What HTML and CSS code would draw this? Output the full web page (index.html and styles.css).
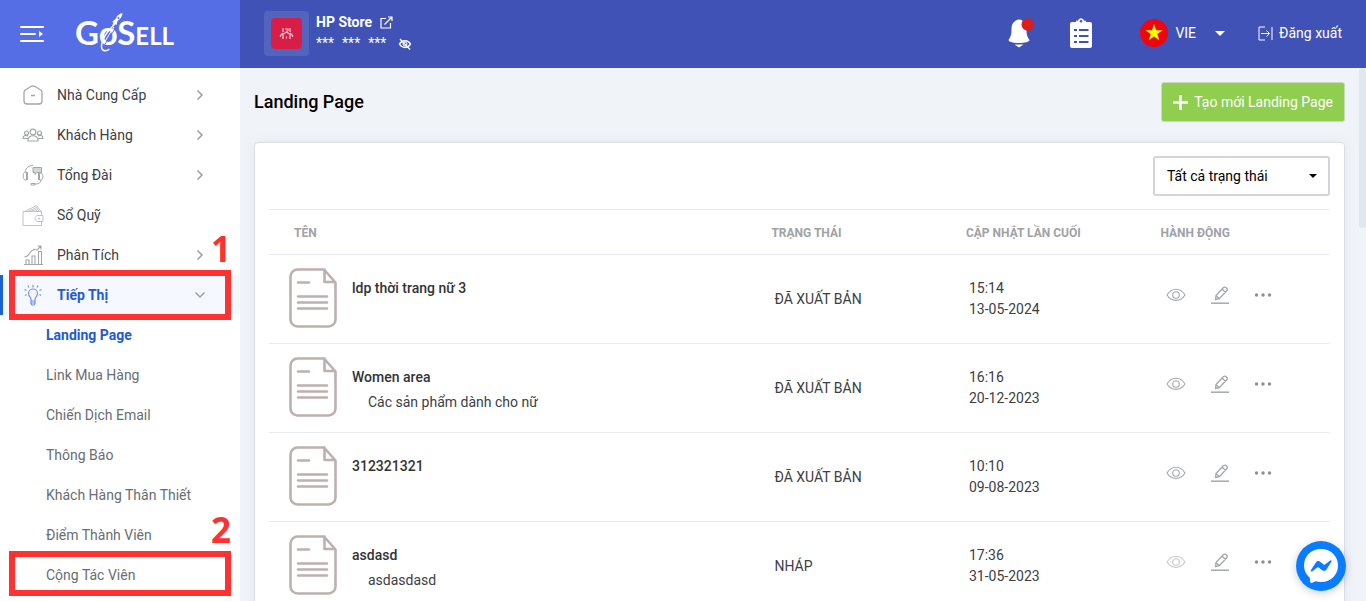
FILE: index.html
```html
<!DOCTYPE html>
<html lang="vi">
<head>
<meta charset="utf-8">
<meta name="viewport" content="width=device-width, initial-scale=1">
<title>Landing Page - GoSell</title>
<link rel="stylesheet" href="styles.css">
</head>
<body>
<svg class="sprite" aria-hidden="true">
  <symbol id="chevron" viewBox="0 0 12 12"><path d="M3.5 1.5 8 6l-4.500 4.500" fill="none" stroke="currentColor" stroke-width="1.500"/></symbol>
  <symbol id="doc" viewBox="0 0 48 62"><g fill="none" stroke="currentColor" stroke-width="2.600" stroke-linecap="round" stroke-linejoin="round"><path d="M35 1.500H8.500a7 7 0 0 0-7 7v43a7 7 0 0 0 7 7h31a7 7 0 0 0 7-7V14.500zM35.500 1.500V14h10.500"/><path d="M9 14.500h11M9 28.500h29M9 34.500h29M9 40.500h29"/></g></symbol>
  <symbol id="eye" viewBox="0 0 20 16"><g fill="none" stroke="currentColor" stroke-width="1.100"><path d="M1 8C5.500 0.300 14.500 0.300 19 8 14.500 15.200 5.500 15.200 1 8z"/><circle cx="10" cy="8" r="3.300"/></g></symbol>
  <symbol id="edit" viewBox="0 0 18 18"><g fill="none" stroke="currentColor" stroke-width="1.300" stroke-linejoin="round"><path d="M4.500 13.500 5 9.500 12.500 1.500Q14 .5 15.500 2T16 4.500L8.500 12.500zM11 3l3.500 3.500M5 9.700l3.400 2.800"/><path d="M0 17.200h18" stroke-width="1.500"/></g></symbol>
  <symbol id="dots" viewBox="0 0 18 4"><g fill="currentColor"><circle cx="2.500" cy="2" r="1.700"/><circle cx="9" cy="2" r="1.700"/><circle cx="15.500" cy="2" r="1.700"/></g></symbol>
</svg>

<header class="topbar">
  <div class="brand">
    <button class="menu-toggle" type="button" aria-label="Menu">
      <svg width="24" height="18" viewBox="0 0 24 18"><path d="M1 2h22M1 9h14M1 16h22" stroke="#fff" stroke-width="2" stroke-linecap="round"/><path d="M19 6v6l4-3z" fill="#fff"/></svg>
    </button>
    <a class="logo" href="#"><span class="logo-big">GoS</span><span class="logo-small">ELL</span>
      <svg class="rocket" width="24" height="40" viewBox="0 0 24 40"><path d="M22.500 0C19 .5 17 2.500 15.500 6L12 9l1.500.5L12 13l3-2 1.500 1 1-4C20.500 6 22.500 3 22.500 0z" fill="#fff"/><circle cx="18.500" cy="5" r="1" fill="#556ee6"/><path d="M15 11C8 17 1 27 1.500 34c.5 5 5 4.500 8 2" fill="none" stroke="#fff" stroke-width="1.500"/><path d="M16 14C12 21 6.500 28 3.500 34" fill="none" stroke="#556ee6" stroke-width="1"/><path d="M14 14C10 20 6 26 4 31" fill="none" stroke="#fff" stroke-width="1"/></svg>
    </a>
  </div>
  <div class="store">
    <div class="avatar"><svg width="31" height="31" viewBox="0 0 31 31"><rect width="31" height="31" rx="4" fill="#d81e46"/><path d="M12 10v4M19 10v4M14 11h3v1.500l-2 1.500M9 18l3-3M22 18l-3-3M12.500 16l3-2 3 2M12 16v5M19 16v5M9.500 17.500V19M21.500 17.500V19M15.500 18.500v2" fill="none" stroke="#fbd9e0" stroke-width="1.100"/></svg></div>
    <div class="store-info">
      <a class="store-name" href="#">HP Store
        <svg width="13" height="13" viewBox="0 0 13 13"><path d="M6 2.500H1v9.500h9.500V7M4.500 8.500 11.500 1.500M8 1h4v4" fill="none" stroke="#fff" stroke-width="1.200"/></svg></a>
      <div class="store-mask"><span>***</span><span>***</span><span>***</span>
        <button type="button" aria-label="Hiển thị"><svg width="14" height="12" viewBox="0 0 14 12"><path d="M1.500 6C4 1.500 10 1.500 12.500 6 10 10.500 4 10.500 1.500 6z" fill="none" stroke="#fff" stroke-width="1.500"/><circle cx="7" cy="6" r="2" fill="none" stroke="#fff"/><path d="M2 1l10 10.500" stroke="#fff" stroke-width="1.300"/></svg></button>
      </div>
    </div>
  </div>
  <div class="tools">
    <button class="bell" type="button" aria-label="Thông báo"><svg width="26" height="30" viewBox="0 0 26 30"><path d="M11 1.500C6 2 3.500 6 3.500 11c0 6-.5 7-3 11 0 1.800 5 3 10.500 3s10.500-1.200 10.500-3c-2.500-4-3-5-3-11 0-5-2.500-9-7.500-9.500z" fill="#fff"/><path d="M6.500 26.500h9L11 29.500z" fill="#fff"/><circle cx="19.700" cy="6.500" r="6.200" fill="#dd1c1c"/></svg></button>
    <button class="tasks" type="button" aria-label="Công việc"><svg width="22" height="30" viewBox="0 0 22 30"><path d="M2 4h4V2.800h2C8.500-.7 13.500-.7 14 2.800h2V4h4a2 2 0 0 1 2 2v22a2 2 0 0 1-2 2H2a2 2 0 0 1-2-2V6a2 2 0 0 1 2-2z" fill="#fff"/><circle cx="11" cy="3.200" r="1.200" fill="#4052b5"/><path d="M4 12h3m2 0h9.500M4 18h3m2 0h9.500M4 24h3m2 0h9.500" stroke="#4052b5" stroke-width="2"/></svg></button>
    <button class="lang" type="button"><svg width="28" height="28" viewBox="0 0 28 28"><circle cx="14" cy="14" r="14" fill="#ee0512"/><path d="M14 5l2.100 6.200h6.400l-5.200 3.800 2 6.200L14 17.500l-5.300 3.700 2-6.200-5.200-3.800h6.400z" fill="#ffff00"/></svg><span>VIE</span><i class="caret"></i></button>
    <a class="logout" href="#"><svg width="15" height="15" viewBox="0 0 15 15"><path d="M7 1H1v13h6M3 7.500h8M8.500 4.500l3 3-3 3M14 1v13" fill="none" stroke="#fff"/></svg>Đăng xuất</a>
  </div>
</header>

<div class="layout">
  <nav class="sidebar">
    <a class="item" href="#"><svg class="ico" viewBox="0 0 22 22"><path d="M9 2.500 3.300 6Q2 7 2 8.500v8.500a3 3 0 0 0 3 3h12a3 3 0 0 0 3-3V8.500Q20 7 18.700 6L13 2.500Q11 1.300 9 2.500zM9 11.500h4" fill="none" stroke="currentColor" stroke-width="1.300"/></svg><span>Nhà Cung Cấp</span><svg class="chev"><use href="#chevron"/></svg></a>
    <a class="item" href="#"><svg class="ico" viewBox="0 0 22 22"><g fill="none" stroke="currentColor" stroke-width="1.200"><circle cx="11" cy="8" r="2.800"/><circle cx="4.500" cy="9" r="2"/><circle cx="17.500" cy="9" r="2"/><path d="M6 17c0-7 10-7 10 0zM6 14.500H1c0-3 3-4 5-2.500M16 14.500h5c0-3-3-4-5-2.500"/></g></svg><span>Khách Hàng</span><svg class="chev"><use href="#chevron"/></svg></a>
    <a class="item" href="#"><svg class="ico" viewBox="0 0 22 22"><g fill="none" stroke="currentColor"><path d="M3 8C4 3.500 7 1.500 11 1.500M4.500 8H3C.5 9 .5 15 3 16h1.500zM5.500 8v8M17.500 9v7H19c2.500-1 2.500-6 0-7zM16.500 9v7M19 16c0 3-3 4-6 4M9 19.500h4v1.500H9zM19.500 9V6"/><path d="M11 3.500h8.500v5H15l-2 2v-2h-2z" fill="#d4d6da"/></g></svg><span>Tổng Đài</span><svg class="chev"><use href="#chevron"/></svg></a>
    <a class="item" href="#"><svg class="ico light" viewBox="0 0 22 22"><g fill="none" stroke="currentColor"><path d="M1 7.500h18.500v4M19.500 17.500v4H1v-14M21 11.500h-5c-4 0-4 6 0 6h5zM3 7.500 14.500 1.500l4.500 6M6 7.500l8.500-4 2.500 4M9 7.500l5-2 1 2"/><circle cx="17" cy="14.500" r=".7"/></g></svg><span>Sổ Quỹ</span></a>
    <a class="item" href="#"><svg class="ico" viewBox="0 0 22 22"><g fill="none" stroke="currentColor" stroke-width="1.100"><path d="M2 20.500h19M4 20v-4h3v4M10 20v-8h3v8M16.500 20V7.500h3V20M2.500 13C8 13 7.500 6 12 5.500L15 6l4-4M15.500 2H19v3.500"/></g></svg><span>Phân Tích</span><svg class="chev"><use href="#chevron"/></svg><b class="step step-one">1</b></a>
    <a class="item active marked" href="#"><svg class="ico" viewBox="0 0 22 22"><g fill="none" stroke="currentColor" stroke-width="1.200"><path d="M9 17v-2c0-1.500-2.500-2.500-2.500-5.500a4.500 4.500 0 0 1 9 0c0 3-2.500 4-2.500 5.500v2zM9 17v2.500l1 1.500h2l1-1.500V17M9 19h4M11 3.500V1M7 3.500 6 1.500M15 3.500 16 1.500M4.500 6.500 2.500 5.500M17.500 6.500l2-1M4.500 10.500l-1.500 1M17.500 10.500l1.500 1"/></g></svg><span>Tiếp Thị</span><svg class="chev down"><use href="#chevron"/></svg></a>
    <a class="sub active" href="#">Landing Page</a>
    <a class="sub" href="#">Link Mua Hàng</a>
    <a class="sub" href="#">Chiến Dịch Email</a>
    <a class="sub" href="#">Thông Báo</a>
    <a class="sub" href="#">Khách Hàng Thân Thiết</a>
    <a class="sub" href="#">Điểm Thành Viên<b class="step step-two">2</b></a>
    <a class="sub marked" href="#">Cộng Tác Viên</a>
  </nav>

  <main class="content">
    <div class="page-head">
      <h1>Landing Page</h1>
      <button class="create" type="button"><svg width="15" height="15" viewBox="0 0 15 15"><path d="M7.500 0v15M0 7.500h15" stroke="#fff" stroke-width="2.500"/></svg>Tạo mới Landing Page</button>
    </div>
    <section class="card">
      <div class="filters">
        <div class="select-wrap"><select aria-label="Trạng thái"><option>Tất cả trạng thái</option></select><i class="caret"></i></div>
      </div>
      <table>
        <colgroup><col class="col-name"><col><col><col></colgroup>
        <thead><tr><th>TÊN</th><th>TRẠNG THÁI</th><th>CẬP NHẬT LẦN CUỐI</th><th>HÀNH ĐỘNG</th></tr></thead>
        <tbody>
          <tr><td><div class="page"><svg class="doc"><use href="#doc"/></svg><div class="page-text"><h2>ldp thời trang nữ 3</h2></div></div></td><td>ĐÃ XUẤT BẢN</td><td>15:14<br>13-05-2024</td>
            <td><div class="actions"><button type="button" aria-label="Xem"><svg class="eye"><use href="#eye"/></svg></button><button type="button" aria-label="Sửa"><svg class="edit"><use href="#edit"/></svg></button><button type="button" aria-label="Thêm"><svg class="dots"><use href="#dots"/></svg></button></div></td></tr>
          <tr><td><div class="page"><svg class="doc"><use href="#doc"/></svg><div class="page-text"><h2>Women area</h2><p>Các sản phẩm dành cho nữ</p></div></div></td><td>ĐÃ XUẤT BẢN</td><td>16:16<br>20-12-2023</td>
            <td><div class="actions"><button type="button" aria-label="Xem"><svg class="eye"><use href="#eye"/></svg></button><button type="button" aria-label="Sửa"><svg class="edit"><use href="#edit"/></svg></button><button type="button" aria-label="Thêm"><svg class="dots"><use href="#dots"/></svg></button></div></td></tr>
          <tr><td><div class="page"><svg class="doc"><use href="#doc"/></svg><div class="page-text"><h2>312321321</h2></div></div></td><td>ĐÃ XUẤT BẢN</td><td>10:10<br>09-08-2023</td>
            <td><div class="actions"><button type="button" aria-label="Xem"><svg class="eye"><use href="#eye"/></svg></button><button type="button" aria-label="Sửa"><svg class="edit"><use href="#edit"/></svg></button><button type="button" aria-label="Thêm"><svg class="dots"><use href="#dots"/></svg></button></div></td></tr>
          <tr><td><div class="page"><svg class="doc"><use href="#doc"/></svg><div class="page-text"><h2>asdasd</h2><p>asdasdasd</p></div></div></td><td>NHÁP</td><td>17:36<br>31-05-2023</td>
            <td><div class="actions"><button type="button" aria-label="Xem" disabled><svg class="eye"><use href="#eye"/></svg></button><button type="button" aria-label="Sửa"><svg class="edit"><use href="#edit"/></svg></button><button type="button" aria-label="Thêm"><svg class="dots"><use href="#dots"/></svg></button></div></td></tr>
        </tbody>
      </table>
    </section>
  </main>
  <div class="scroll-thumb"></div>
</div>

<button class="messenger" type="button" aria-label="Messenger"><svg width="50" height="50" viewBox="0 0 50 50"><circle cx="25" cy="25" r="25" fill="#0a7cff"/><path d="M25 8C15 8 8 15.300 8 24.500c0 5 2 9 5.500 12 .8.800.5 3.500.8 4.800.5 1 1.300.8 2 .4l3.200-1.400c1.600.5 3.500.8 5.500.8 10 0 17-7.300 17-16.600S35 8 25 8z" fill="#fff"/><path d="M14.800 29.300 20 21.200c.9-1.300 2.500-1.500 3.700-.7l4 3c.4.3.8.3 1.200 0l5.400-4c.8-.5 1.600.4 1.200 1.100l-5.200 8.100c-.9 1.300-2.500 1.500-3.700.7l-4-3c-.4-.3-.8-.3-1.200 0l-5.400 4c-.8.500-1.600-.4-1.200-1.100z" fill="#0a7cff"/></svg></button>
</body>
</html>
```
FILE: styles.css
```css
* { box-sizing: border-box; }
body {
  margin: 0;
  height: 100vh;
  overflow: hidden;
  display: flex;
  flex-direction: column;
  background: #f0f3f8;
  color: #3c4043;
  font: 14px/21px Roboto, "Noto Sans", sans-serif;
}
a { color: inherit; text-decoration: none; }
button { padding: 0; border: 0; background: none; color: inherit; font: inherit; cursor: pointer; }
svg { display: block; flex: none; }
h1, h2, p { margin: 0; }
.sprite { position: absolute; width: 0; height: 0; }
.caret { border: 5px solid transparent; border-top-color: currentColor; border-bottom: 0; }

/* Top bar */
.topbar { flex: none; display: flex; align-items: stretch; height: 68px; background: #4052b5; color: #fff; }
.brand { width: 240px; flex: none; display: flex; align-items: center; gap: 31px; padding-left: 20px; background: #556ee6; }
.logo { position: relative; display: flex; align-items: baseline; font: bold 33px/40px Lato, sans-serif; }
.logo-small { font-size: 24px; }
.rocket { position: absolute; left: 25px; top: 1px; }
.store { display: flex; align-items: center; gap: 7px; padding: 0 0 2px 24px; }
.avatar { display: flex; align-items: center; justify-content: center; width: 45px; height: 45px; border-radius: 4px; background: #5364bd; }
.store-name { display: flex; align-items: center; gap: 8px; font-weight: 700; }
.store-mask { display: flex; align-items: center; gap: 8px; }
.store-mask button { margin-left: 4px; }
.tools { margin-left: auto; display: flex; align-items: center; padding: 0 24px 2px 0; }
.tasks { margin-left: 36px; }
.lang { display: flex; align-items: center; gap: 7px; margin-left: 48px; }
.lang .caret { margin-left: 12px; }
.logout { display: flex; align-items: center; gap: 6px; margin-left: 33px; }

/* Sidebar */
.layout { position: relative; flex: 1; min-height: 0; display: flex; }
.sidebar { width: 240px; flex: none; padding-top: 7px; background: #fff; }
.item, .sub { position: relative; display: flex; align-items: center; height: 40px; }
.item { gap: 13px; padding: 0 34px 0 22px; }
.item span { flex: 1; }
.ico { width: 22px; height: 22px; color: #a3a6ab; }
.ico.light { color: #bfc2c6; }
.chev { width: 12px; height: 12px; color: #9b9ea3; }
.chev.down { transform: rotate(90deg); }
.sub { padding-left: 46px; color: #6a6d72; }
.item.active { background: #f5f9ff; box-shadow: inset 3px 0 #1b62d8; }
.item.active, .sub.active { color: #2459d3; font-weight: 700; }
.item.active .ico { color: #7b8fe0; }
.marked::after { content: ""; position: absolute; inset: -5px 9px; border: 6px solid #ff3131; }
.sub.marked::after { top: -4px; bottom: -1px; }
.step { position: absolute; right: 9px; color: #ff3131; font: bold 35px/40px "Open Sans", sans-serif; }
.step-one { top: -6px; }
.step-two { top: -5px; }

/* Page content */
.content { flex: 1; min-width: 0; padding: 14px 21px 0 14px; }
.page-head { display: flex; align-items: flex-start; justify-content: space-between; height: 60px; }
h1 { font-size: 18px; font-weight: 500; line-height: 40px; color: #000; }
.create { display: flex; align-items: center; gap: 6px; height: 40px; padding: 0 11px; border: 1px solid #c9d9c0; border-radius: 3px; background: #90ce50; color: #fff; }
.card { padding: 13px 14px 0; border: 1px solid #dadde1; border-radius: 4px; background: #fff; box-shadow: 0 0 12px #e3e8ef; }
.filters { display: flex; justify-content: flex-end; padding-bottom: 13px; }
.select-wrap { position: relative; width: 177px; }
.select-wrap select { width: 100%; height: 40px; padding: 0 12px; appearance: none; border: 2px solid #d1d5db; border-radius: 3px; background: #fff; color: #000; font: inherit; }
.select-wrap .caret { position: absolute; right: 13px; top: 18px; border-width: 4px; border-bottom: 0; color: #000; }

table { width: 100%; table-layout: fixed; border-collapse: collapse; }
.col-name { width: 45%; }
th { height: 45px; padding: 2px 0 0 25px; border-top: 1px solid #e8eaf1; text-align: left; color: #a0a2a7; font-size: 12px; font-weight: 700; }
td { height: 89px; padding: 0 0 0 28px; border-top: 1px solid #e8eaf0; vertical-align: middle; }
td:first-child { padding-left: 20px; }
.page { display: flex; gap: 15px; height: 62px; }
.doc { width: 48px; height: 62px; color: #bfb0b0; }
.page-text { padding-top: 10px; }
h2 { font-size: 14px; font-weight: 500; color: #333; }
.page-text p { padding: 4px 0 0 16px; }
.actions { display: flex; align-items: center; gap: 25px; padding: 0 0 8px 3px; color: #a5a8ac; }
.actions button:disabled { opacity: 0.6; }
.eye { width: 20px; height: 16px; }
.edit { width: 18px; height: 18px; }
.dots { width: 18px; height: 4px; color: #8c8f93; }

.scroll-thumb { position: absolute; right: 0; top: 0; width: 7px; height: 30%; border-radius: 4px; background: #e1e6ef; }
.messenger { position: absolute; right: 20px; bottom: 10px; border-radius: 50%; box-shadow: 0 2px 8px #0003; }
```
